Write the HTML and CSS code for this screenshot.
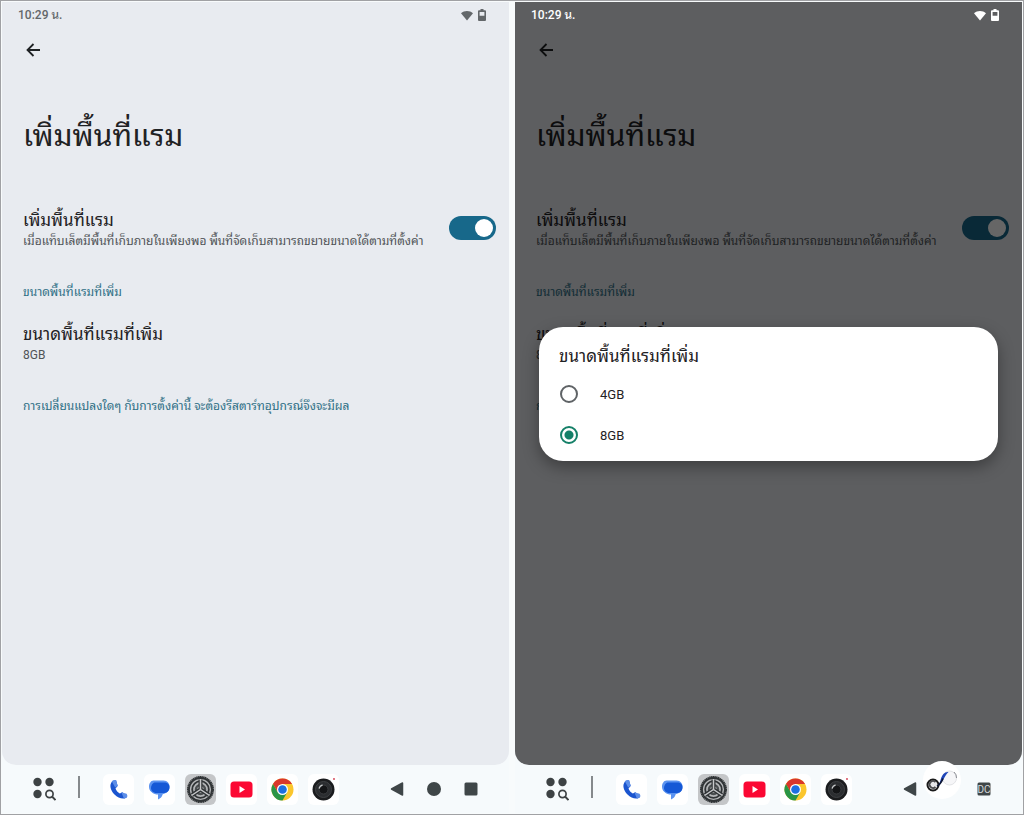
FILE: index.html
```
<!DOCTYPE html>
<html lang="th">
<head>
    <meta charset="UTF-8">
    <meta name="viewport" content="width=device-width, initial-scale=1.0">
    <title>เพิ่มพื้นที่แรม</title>
    <link rel="stylesheet" href="styles.css">
</head>
<body>
    <!-- shared icons -->
    <svg class="sprite" aria-hidden="true">
        <symbol id="wifi" viewBox="0 0 12 11">
            <path d="M6 10.5L0 3.2C3.4.2 8.6.2 12 3.2z" fill="currentColor"/>
        </symbol>
        <symbol id="battery" viewBox="0 0 8 12">
            <path fill-rule="evenodd" fill="currentColor" d="M2.5 0h3v1.2H7a1 1 0 0 1 1 1V11a1 1 0 0 1-1 1H1a1 1 0 0 1-1-1V2.200a1 1 0 0 1 1-1h1.500zM1.600 3v3.800h4.800V3z"/>
        </symbol>
        <symbol id="arrow" viewBox="0 0 14 14">
            <path d="M14 7H1.500M7.500 1L1.500 7l6 6" fill="none" stroke="currentColor" stroke-width="1.800"/>
        </symbol>
        <symbol id="apps" viewBox="0 0 24 24">
            <g fill="#3d4244">
                <circle cx="5.500" cy="5" r="4.200"/>
                <circle cx="17.500" cy="5" r="4.200"/>
                <circle cx="5.500" cy="17" r="4.200"/>
            </g>
            <circle cx="17.500" cy="17" r="3.600" fill="none" stroke="#3d4244" stroke-width="1.700"/>
            <path d="M20 19.500l3.500 3.500" stroke="#3d4244" stroke-width="1.900"/>
        </symbol>
        <symbol id="phone" viewBox="0 0 31 31">
            <path d="M9 7.500C6 11 7.500 16.500 11.500 20.500s9.500 5.500 12.500 2.500l-4.500-4.800-2.700 1.300c-2-1-3.500-2.700-4.300-5l2.200-2.500-1.700-6z" fill="#1b55cf"/>
            <path d="M8.800 7.300c1-1.300 2.600-1.500 4.200-1.300l1.700 5.800-2.500 1.600zM18.300 18.300l5.300 1.400c.8 1.200 1 2.400.4 3.600l-3 1.500z" fill="#5c8ee8"/>
        </symbol>
        <symbol id="messages" viewBox="0 0 31 31">
            <path d="M9.500 6.500h10c4 0 6.200 3 6 6.500-.2 4-3 5.500-6 5.500h-9c-4 0-5.500-3-5.500-6s2-6 4.500-6z" fill="#5b93f0"/>
            <path d="M6 13.500c0 4.500 3.500 7 8 7v5c2.500-1 4-2.800 4.700-5.200 3-.8 5.500-2.500 6.300-5z" fill="#5b93f0"/>
            <path d="M10.500 8.500h11c3 .5 4.300 2.700 4 5.500-.4 3.700-3.500 5-6 5h-7c-3.500 0-5.500-2.500-5.500-5s1.500-5 3.500-5.500z" fill="#1558d6"/>
        </symbol>
        <symbol id="settings" viewBox="0 0 31 31">
            <circle cx="15.500" cy="15.500" r="12.500" fill="#b4b6b8" stroke="#303436" stroke-width="2" stroke-dasharray="1.400 .35"/>
            <circle cx="15.500" cy="15.500" r="11.500" fill="none" stroke="#303436" stroke-width="1.800"/>
            <circle cx="15.500" cy="15.500" r="8.300" fill="none" stroke="#303436" stroke-width="1.800"/>
            <circle cx="15.500" cy="15.500" r="4.500" fill="none" stroke="#4b4f51" stroke-width="2.500"/>
            <path d="M15.500 15.500V5.500M15.500 15.500l-8.500 5.500M15.500 15.500l8.500 5.500" stroke="#303436" stroke-width="4"/>
            <path d="M15.500 15.500V5M15.500 15.500l-9 6M15.500 15.500l9 6" stroke="#c6c8ca" stroke-width="1.500"/>
        </symbol>
        <symbol id="youtube" viewBox="0 0 31 31">
            <rect x="4.500" y="7.500" width="22" height="16" rx="3.500" fill="#fb0833"/>
            <path d="M13.500 12v7l5.500-3.500z" fill="#fff"/>
        </symbol>
        <symbol id="chrome" viewBox="0 0 31 31">
            <circle cx="15.500" cy="15.500" r="11" fill="#fbc62d"/>
            <path d="M15.500 4.500a11 11 0 0 1 9.530 5.500H15.500l-4.760 8.250L5.970 10A11 11 0 0 1 15.500 4.500z" fill="#d9372b"/>
            <path d="M5.970 10a11 11 0 0 0 9.530 16.500l4.760-8.250h-9.520z" fill="#2a9546"/>
            <circle cx="15.500" cy="15.500" r="5.500" fill="#fff"/>
            <circle cx="15.500" cy="15.500" r="4.300" fill="#1d6fe0"/>
        </symbol>
        <symbol id="camera" viewBox="0 0 31 31">
            <circle cx="15.500" cy="15.500" r="11" fill="#1b1c1e"/>
            <circle cx="15.500" cy="15.500" r="8" fill="#2b2d30" stroke="#3e4043"/>
            <circle cx="15.500" cy="15.500" r="4.500" fill="#141517" stroke="#3a3c3f"/>
            <path d="M11 14.500c.5-1.800 1.700-3 3.500-3.500" fill="none" stroke="#c9cbcd" stroke-width="1.300"/>
            <circle cx="26" cy="5" r=".9" fill="#d33a4d"/>
        </symbol>
        <symbol id="nav-back" viewBox="0 0 14 14">
            <path d="M12.500 1v12L1.500 7z" fill="#3f4648" stroke="#3f4648" stroke-width="1.500" stroke-linejoin="round"/>
        </symbol>
        <symbol id="nav-home" viewBox="0 0 14 14">
            <circle cx="7" cy="7" r="7" fill="#3f4648"/>
        </symbol>
        <symbol id="nav-recent" viewBox="0 0 14 14">
            <rect x=".5" y=".5" width="13" height="13" rx="1.500" fill="#3f4648"/>
        </symbol>
    </svg>

    <div class="compare">
        <!-- settings page -->
        <section class="device">
            <div class="screen">
                <header class="status">
                    <span>10:29 น.</span>
                    <span class="status-icons">
                        <svg width="12" height="11"><use href="#wifi"/></svg>
                        <svg width="8" height="12"><use href="#battery"/></svg>
                    </span>
                </header>
                <button type="button" class="back" aria-label="ย้อนกลับ"><svg width="14" height="14"><use href="#arrow"/></svg></button>
                <main class="content">
                    <h1>เพิ่มพื้นที่แรม</h1>
                    <div class="row">
                        <label for="ram1">
                            <span class="row-title">เพิ่มพื้นที่แรม</span>
                            <span class="row-text">เมื่อแท็บเล็ตมีพื้นที่เก็บภายในเพียงพอ พื้นที่จัดเก็บสามารถขยายขนาดได้ตามที่ตั้งค่า</span>
                        </label>
                        <input type="checkbox" role="switch" class="switch" id="ram1" checked>
                    </div>
                    <h2>ขนาดพื้นที่แรมที่เพิ่ม</h2>
                    <button type="button" class="size">
                        <span class="row-title">ขนาดพื้นที่แรมที่เพิ่ม</span>
                        <span class="row-text">8GB</span>
                    </button>
                    <p class="note">การเปลี่ยนแปลงใดๆ กับการตั้งค่านี้ จะต้องรีสตาร์ทอุปกรณ์จึงจะมีผล</p>
                </main>
            </div>
            <footer class="taskbar">
                <button type="button" class="apps" aria-label="แอปทั้งหมด"><svg width="24" height="24"><use href="#apps"/></svg></button>
                <span class="divider"></span>
                <div class="dock">
                    <button type="button" aria-label="โทรศัพท์"><svg><use href="#phone"/></svg></button>
                    <button type="button" aria-label="ข้อความ"><svg><use href="#messages"/></svg></button>
                    <button type="button" class="active" aria-label="การตั้งค่า"><svg><use href="#settings"/></svg></button>
                    <button type="button" aria-label="YouTube"><svg><use href="#youtube"/></svg></button>
                    <button type="button" aria-label="Chrome"><svg><use href="#chrome"/></svg></button>
                    <button type="button" aria-label="กล้อง"><svg><use href="#camera"/></svg></button>
                </div>
                <nav class="nav">
                    <button type="button" aria-label="กลับ"><svg><use href="#nav-back"/></svg></button>
                    <button type="button" aria-label="หน้าแรก"><svg><use href="#nav-home"/></svg></button>
                    <button type="button" aria-label="ล่าสุด"><svg><use href="#nav-recent"/></svg></button>
                </nav>
            </footer>
        </section>

        <!-- same page with the size dialog open -->
        <section class="device">
            <div class="screen dimmed">
                <header class="status">
                    <span>10:29 น.</span>
                    <span class="status-icons">
                        <svg width="12" height="11"><use href="#wifi"/></svg>
                        <svg width="8" height="12"><use href="#battery"/></svg>
                    </span>
                </header>
                <button type="button" class="back" aria-label="ย้อนกลับ"><svg width="14" height="14"><use href="#arrow"/></svg></button>
                <main class="content">
                    <h1>เพิ่มพื้นที่แรม</h1>
                    <div class="row">
                        <label for="ram2">
                            <span class="row-title">เพิ่มพื้นที่แรม</span>
                            <span class="row-text">เมื่อแท็บเล็ตมีพื้นที่เก็บภายในเพียงพอ พื้นที่จัดเก็บสามารถขยายขนาดได้ตามที่ตั้งค่า</span>
                        </label>
                        <input type="checkbox" role="switch" class="switch" id="ram2" checked>
                    </div>
                    <h2>ขนาดพื้นที่แรมที่เพิ่ม</h2>
                    <button type="button" class="size">
                        <span class="row-title">ขนาดพื้นที่แรมที่เพิ่ม</span>
                        <span class="row-text">8GB</span>
                    </button>
                    <p class="note">การเปลี่ยนแปลงใดๆ กับการตั้งค่านี้ จะต้องรีสตาร์ทอุปกรณ์จึงจะมีผล</p>
                </main>
                <div class="scrim">
                    <form class="dialog" role="dialog" aria-labelledby="dialogTitle">
                        <h3 id="dialogTitle">ขนาดพื้นที่แรมที่เพิ่ม</h3>
                        <label><input type="radio" name="size" value="4"> 4GB</label>
                        <label><input type="radio" name="size" value="8" checked> 8GB</label>
                    </form>
                </div>
            </div>
            <footer class="taskbar">
                <button type="button" class="apps" aria-label="แอปทั้งหมด"><svg width="24" height="24"><use href="#apps"/></svg></button>
                <span class="divider"></span>
                <div class="dock">
                    <button type="button" aria-label="โทรศัพท์"><svg><use href="#phone"/></svg></button>
                    <button type="button" aria-label="ข้อความ"><svg><use href="#messages"/></svg></button>
                    <button type="button" class="active" aria-label="การตั้งค่า"><svg><use href="#settings"/></svg></button>
                    <button type="button" aria-label="YouTube"><svg><use href="#youtube"/></svg></button>
                    <button type="button" aria-label="Chrome"><svg><use href="#chrome"/></svg></button>
                    <button type="button" aria-label="กล้อง"><svg><use href="#camera"/></svg></button>
                </div>
                <nav class="nav">
                    <button type="button" aria-label="กลับ"><svg><use href="#nav-back"/></svg></button>
                    <button type="button" aria-label="หน้าแรก"><svg><use href="#nav-home"/></svg></button>
                    <button type="button" aria-label="ล่าสุด"><svg><use href="#nav-recent"/></svg><span class="mark">DC</span></button>
                </nav>
            </footer>
            <svg class="logo" viewBox="0 0 40 40" aria-hidden="true">
                <circle cx="20" cy="20" r="19" fill="#fff"/>
                <circle cx="11" cy="25" r="5.500" fill="#e6e6e8" stroke="#1a1a1a" stroke-width="2"/>
                <path d="M13.500 22a3.500 3.500 0 1 0 0 5" fill="none" stroke="#4a4a4c" stroke-width="1.800"/>
                <circle cx="27.500" cy="18" r="7" fill="#f6f6f8" stroke="#e2e3e6"/>
                <path d="M32 12a7.500 7.500 0 0 1 2.500 6" fill="none" stroke="#8b8c92"/>
                <path d="M15.500 25.500c2-1 2.500-4 3.500-7 1.200-3.500 3.500-7 7.500-6.500-3.500 2.500-5 10-11 13.500z" fill="#1f45b8"/>
                <path d="M15 26c2.500-1 4.500-4 6-7.500" fill="none" stroke="#0e1633" stroke-width="1.800"/>
            </svg>
        </section>
    </div>
</body>
</html>
```
FILE: styles.css
```
* {
    box-sizing: border-box;
}

body {
    font-family: Roboto, "Noto Looped Thai", "Noto Sans Thai Looped", Loma, Waree, Garuda, "Noto Sans", sans-serif;
    background-color: #f8fbfc;
    color: #1f2224;
    margin: 0;
}

h1, h2, h3, p {
    margin: 0;
    font-weight: normal;
}

button {
    background: none;
    border: none;
    padding: 0;
    color: inherit;
    font-family: inherit;
    cursor: pointer;
}

svg {
    display: block;
}

.sprite {
    display: none;
}

.compare {
    display: grid;
    grid-template-columns: 1fr 1fr;
    gap: 6px;
    min-height: 100vh;
    padding: 1px;
    border: 1px solid #a0a1a4;
}

.device {
    position: relative;
    display: flex;
    flex-direction: column;
    min-width: 0;
    background-color: #f6fafc;
}

.screen {
    position: relative;
    flex: 1;
    background-color: #e8ebf0;
    border-radius: 0 0 14px 14px;
}

.status {
    display: flex;
    justify-content: space-between;
    align-items: center;
    height: 26px;
    padding: 0 23px 0 16px;
    font-size: 12px;
    line-height: 24px;
    font-weight: 500;
    color: #63676a;
}

.status-icons {
    display: flex;
    align-items: center;
    gap: 5px;
}

.back {
    display: flex;
    justify-content: center;
    align-items: center;
    width: 40px;
    height: 44px;
    margin-left: 11px;
}

.content {
    padding: 40px 13px 0 21px;
}

h1 {
    font-size: 30px;
    line-height: 48px;
    margin: 0 0 48px;
}

.row {
    display: flex;
    justify-content: space-between;
    align-items: flex-start;
}

.row-title, .row-text {
    display: block;
    white-space: nowrap;
}

.row-title {
    font-size: 17px;
    line-height: 24px;
}

.row-text {
    font-size: 12px;
    line-height: 18px;
    color: #505457;
}

.switch {
    appearance: none;
    flex: none;
    width: 47px;
    height: 24px;
    margin: 8px 0 0;
    padding: 3px;
    border-radius: 12px;
    background-color: #17688a;
}

.switch::before {
    content: "";
    display: block;
    width: 18px;
    height: 18px;
    border-radius: 50%;
    background-color: #fff;
}

.switch:checked::before {
    margin-left: auto;
}

h2, .note {
    font-size: 12px;
    line-height: 20px;
    color: #2f7086;
}

h2 {
    margin: 32px 0 20px;
}

.size {
    display: block;
    text-align: left;
}

.note {
    margin-top: 32px;
}

/* dialog */
.dimmed .status {
    position: relative;
    z-index: 2;
    color: #fff;
}

.scrim {
    position: absolute;
    inset: 0;
    display: flex;
    align-items: center;
    padding: 20px 24px 0;
    border-radius: 0 0 14px 14px;
    background-color: rgba(0, 0, 0, 0.6);
}

.dialog {
    width: 100%;
    padding: 15px 20px 5px;
    border-radius: 24px;
    background-color: #fff;
    box-shadow: 0 6px 16px rgba(0, 0, 0, 0.35);
}

h3 {
    font-size: 17px;
    line-height: 28px;
    margin-bottom: 4px;
}

.dialog label {
    display: flex;
    align-items: center;
    gap: 22px;
    height: 41px;
    font-size: 13px;
}

.dialog input {
    appearance: none;
    width: 18px;
    height: 18px;
    margin: 0 0 0 1px;
    border: 2px solid #5f6366;
    border-radius: 50%;
}

.dialog input:checked {
    border-color: #158068;
    background: radial-gradient(circle, #158068 4px, #fff 5px);
}

/* taskbar */
.taskbar {
    display: flex;
    align-items: center;
    height: 48px;
    padding: 0 26px 0 30px;
}

.divider {
    width: 2px;
    height: 22px;
    margin: 0 23px 4px 22px;
    background-color: #85898c;
}

.dock {
    display: flex;
    gap: 10px;
}

.dock button {
    border-radius: 6px;
    background-color: #fff;
}

.dock .active {
    background-color: #c4c6c8;
}

.dock svg {
    width: 31px;
    height: 31px;
}

.nav {
    display: flex;
    gap: 13px;
    margin-left: auto;
}

.nav button {
    position: relative;
    display: flex;
    justify-content: center;
    align-items: center;
    width: 24px;
    height: 24px;
}

.nav svg {
    width: 14px;
    height: 14px;
}

.mark {
    position: absolute;
    font-size: 10px;
    color: #d5d8da;
}

.logo {
    position: absolute;
    right: 60px;
    bottom: 13px;
    width: 40px;
    height: 40px;
}
```
